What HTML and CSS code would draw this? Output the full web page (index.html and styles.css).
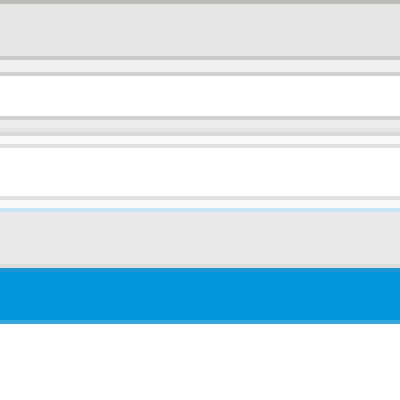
FILE: index.html
```html
<!DOCTYPE html>
<html lang="en">
<head>
    <meta charset="UTF-8">
    <meta name="viewport" content="width=device-width, initial-scale=1.0">
    <title>Panel</title>
    <link rel="stylesheet" href="styles.css">
</head>
<body>
    <main class="page">
        <header class="titlebar"></header>
        <nav class="tabs"></nav>
        <section class="content"></section>
        <div class="divider">
            <div class="divider-top"></div>
            <div class="divider-mid"></div>
            <div class="divider-low"></div>
            <div class="divider-foot"></div>
        </div>
        <section class="spacer"></section>
        <div class="field">
            <div class="field-input"></div>
            <div class="field-body"></div>
        </div>
        <button class="action" type="button"></button>
    </main>
</body>
</html>
```

FILE: styles.css
```css
* {
    margin: 0;
    padding: 0;
    box-sizing: border-box;
    font-family: 'Liberation Sans', Arial, sans-serif;
}

html, body {
    width: 100%;
    height: 100%;
    background-color: #ffffff;
}

.page {
    display: flex;
    flex-direction: column;
    width: 100%;
}

.titlebar {
    height: 60px;
    background-color: #e5e5e3;
    border-top: 4px solid #babab6;
    border-bottom: 4px solid #c9c9c7;
}

.tabs {
    height: 16px;
    background-color: #efefef;
    border-bottom: 4px solid #d2d2d2;
}

.content {
    height: 44px;
    background-color: #ffffff;
    border-bottom: 4px solid #d0d0d0;
}

.divider {
    display: flex;
    flex-direction: column;
}

.divider-top {
    height: 8px;
    background-color: #ececec;
}

.divider-mid {
    height: 4px;
    background-color: #e4e4e4;
}

.divider-low {
    height: 4px;
    background-color: #d9d9d9;
}

.divider-foot {
    height: 12px;
    background-color: #f8f8f8;
    border-bottom: 4px solid #e0e0e0;
}

.spacer {
    height: 48px;
    background-color: #ffffff;
}

.field {
    display: flex;
    flex-direction: column;
    border-top: 4px solid #e0e0e0;
}

.field-input {
    height: 12px;
    background-color: #f8f8f8;
    border-bottom: 4px solid #c5e4f4;
}

.field-body {
    height: 56px;
    background-color: #e8e8e8;
    border-bottom: 4px solid #dbdbdb;
}

.action {
    height: 56px;
    width: 100%;
    border: none;
    background-color: #0096dc;
    border-top: 4px solid #1c95d5;
    border-bottom: 4px solid #36a8e0;
}
```
